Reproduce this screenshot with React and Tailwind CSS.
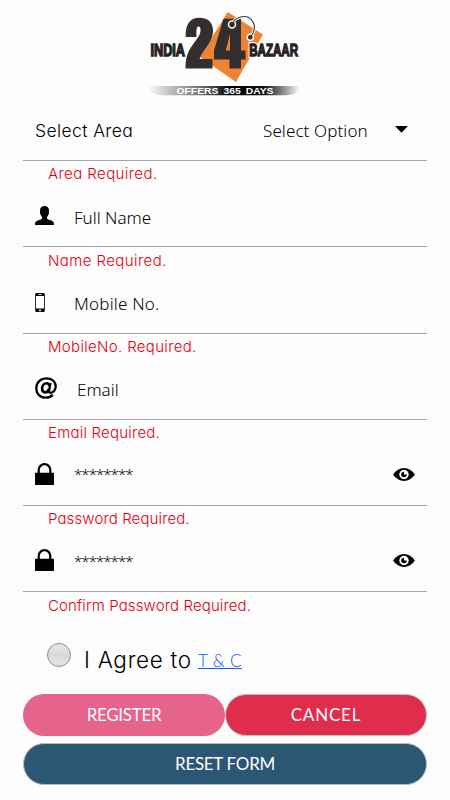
import React from "react";

const PersonIcon = () => (
  <svg className="block h-[19px] w-[19px]" viewBox="0 0 19 19">
    <path
      d="M9.5 0C6.700 0 5 1.600 5 4.500c0 .7.1 1.200.2 1.700-.6.3-.3 1.800.5 2.200.2 1.200.7 2 1.300 2.600v1.500C6.400 14.200.2 14 0 17.500V19h19v-1.500c-.2-3.500-6.400-3.300-7-5V11c.6-.6 1.100-1.400 1.300-2.600.8-.4 1.100-1.900.5-2.200.1-.5.2-1 .2-1.700C14 1.600 12.300 0 9.500 0z"
      fill="#000"
    />
  </svg>
);

const PhoneIcon = () => (
  <svg className="block h-[19px] w-[10px]" viewBox="0 0 10 19">
    <path
      fillRule="evenodd"
      d="M1.500 0h7A1.300 1.300 0 0 1 9.800 1.300v16.400A1.300 1.300 0 0 1 8.500 19h-7A1.300 1.300 0 0 1 .2 17.700V1.300A1.300 1.300 0 0 1 1.500 0zM1 3v12.500h8V3zM3.500 1.100v.8h3v-.8zM4.500 16.300v.6h-.7v.8h.7v.6h1v-.6h.7v-.8h-.7v-.6z"
      fill="#000"
    />
  </svg>
);

const AtIcon = () => (
  <svg className="block h-[22px] w-[22px]" viewBox="0 0 22 22" fill="none" stroke="#000">
    <path d="M17.800 17.900C16 19.800 13.700 20.700 11 20.700 5.200 20.700 1.300 16.900 1.300 11.300 1.300 5.400 5.600 1.300 11.500 1.300c5.300 0 9.200 3.200 9.200 8 0 4-2.600 6.500-5 6.500-1.500 0-1.900-.9-1.600-2.400l1.400-7.300" strokeWidth="2.300" />
    <path d="M14.500 8.900c-.3-1.700-1.300-2.700-2.900-2.700-2.600 0-4.500 2.500-4.500 5.400 0 2.300 1.100 3.800 3 3.800 2 0 3.500-1.600 4-4" strokeWidth="2.600" />
  </svg>
);

const LockIcon = () => (
  <svg className="block h-[22px] w-[19px]" viewBox="0 0 19 22">
    <path d="M3.700 10.500V7a5.800 5.800 0 0 1 11.600 0v3.500" fill="none" stroke="#000" strokeWidth="2.200" />
    <rect y="9.800" width="19" height="12.200" rx=".5" fill="#000" />
  </svg>
);

const EyeIcon = () => (
  <svg className="block h-[13px] w-[22px]" viewBox="0 0 22 13">
    <path d="M0 6.500C3 2.300 6.500 0 11 0s8 2.300 11 6.500C19 10.700 15.500 13 11 13S3 10.700 0 6.500z" fill="#000" />
    <circle cx="11" cy="6.500" r="4.700" fill="#fff" />
    <path d="M11 3.700a2.800 2.800 0 1 0 2.800 2.800H11z" fill="#000" />
  </svg>
);

const Logo = () => (
  <svg className="block h-[102px] w-[170px]" viewBox="140 0 170 102" role="img" aria-label="India 24 Bazaar">
    <defs>
      <linearGradient id="ribbon">
        <stop offset="0" stopColor="#fff" />
        <stop offset=".14" stopColor="#c5c5c5" />
        <stop offset=".34" stopColor="#777" />
        <stop offset=".55" stopColor="#000" />
        <stop offset=".76" stopColor="#111" />
        <stop offset=".9" stopColor="#999" />
        <stop offset="1" stopColor="#fff" />
      </linearGradient>
    </defs>
    <path d="M227.700 12L263 34.500 236 82l-36-25z" fill="#ee8431" />
    <path
      d="M185.700 37c-.4-12 3.500-19.300 13.800-19.300 9 0 13.500 5 13.500 13.300 0 11-9 17-13.500 28h13V68.500h-27c0-14 3.500-18.500 8.500-25.500 4-5.500 6.500-8.500 6.500-13 0-2.300-.4-3.500-1.800-3.500-2 0-2.300 2.400-2.300 6.400V37z"
      fill="#332f30"
    />
    <path
      fillRule="evenodd"
      d="M223.500 18.700H241V50.500h4.500v9H241V68.500h-11.500v-9H214V50.500zM230 34l-4.200 16.500H230z"
      fill="#332f30"
    />
    <g fontFamily="Liberation Sans, Arial, sans-serif" fontWeight="700" fontSize="17" fill="#262223" stroke="#262223">
      <text transform="translate(150.500 56) scale(.8 1)" textLength="43" lengthAdjust="spacingAndGlyphs" strokeWidth="1.400">INDIA</text>
      <text transform="translate(249.200 56) scale(.8 1)" textLength="61" lengthAdjust="spacingAndGlyphs" stroke="#fff" strokeWidth="4">BAZAAR</text>
      <text transform="translate(249.200 56) scale(.8 1)" textLength="61" lengthAdjust="spacingAndGlyphs" strokeWidth="1.400">BAZAAR</text>
    </g>
    <path d="M232.300 24.300C234.500 17 246 13.700 251.500 19.800c4.300 5 3.600 12-.8 16.900" fill="none" stroke="#fff" strokeWidth="3" />
    <circle cx="232" cy="24.500" r="3.500" fill="#332f30" stroke="#fff" strokeWidth="1.500" />
    <circle cx="250.300" cy="37.300" r="3.100" fill="#332f30" stroke="#fff" strokeWidth="1.400" />
    <path d="M232.300 24.300C234.500 17 246 13.700 251.500 19.800c4.300 5 3.600 12-.8 16.900" fill="none" stroke="#332f30" strokeWidth="1.100" />
    <path d="M147 86h153.500c-2 6.200-7 9.200-15 9.200h-123c-8 0-13.500-3-15.500-9.200z" fill="url(#ribbon)" />
    <text x="176.500" y="93.900" fontFamily="Liberation Sans, Arial, sans-serif" fontWeight="700" fontSize="9.400" fill="#fff" textLength="97" lengthAdjust="spacingAndGlyphs" wordSpacing="2">OFFERS 365 DAYS</text>
  </svg>
);

const fields = [
  { icon: PersonIcon, label: "Full Name", style: "ml-5 text-[17px]", iconShift: "mb-[3px]", error: "Name Required.", tracking: "tracking-[0.42px]" },
  { icon: PhoneIcon, label: "Mobile No.", style: "ml-[29px] text-[17px] tracking-[0.2px]", iconShift: "mb-[3px]", error: "MobileNo. Required.", tracking: "tracking-[0.33px]" },
  { icon: AtIcon, label: "Email", style: "ml-5 text-[17px]", iconShift: "mb-1", error: "Email Required.", tracking: "tracking-[0.22px]" },
  { icon: LockIcon, label: "********", style: "ml-5 mb-[3px] text-[15px] tracking-[-0.95px]", iconShift: "mb-1", error: "Password Required.", tracking: "tracking-[0.12px]", secret: true },
  { icon: LockIcon, label: "********", style: "ml-5 mb-[3px] text-[15px] tracking-[-0.95px]", iconShift: "mb-1", error: "Confirm Password Required.", tracking: "tracking-[0.13px]", secret: true },
];

const ErrorText = ({ tracking, children }) => (
  <p className={`flex h-[27.250px] items-center pl-[25px] font-['Inter',sans-serif] text-[15px] font-light text-[#e3000f] [font-feature-settings:'cv11'] ${tracking}`}>
    {children}
  </p>
);

export default function App() {
  return (
    <div className="h-[800px] w-[450px] overflow-hidden bg-[#fdfdfd] text-black">
      <header className="flex justify-center">
        <Logo />
      </header>

      <form className="ml-[23px] w-[404px]">
        {/* AREA */}
        <div className="flex h-[59px] items-center border-b border-[#a3a3aa] pl-3">
          <span className="w-[228px] pt-px font-['Inter',sans-serif] text-[17.500px] font-light tracking-[0.4px] [font-feature-settings:'cv11']">Select Area</span>
          <span className="w-[132px] font-['Noto_Sans',sans-serif] text-[17px] font-light tracking-[0.1px]">Select Option</span>
          <svg className="mb-1 block h-[7px] w-[13px]" viewBox="0 0 13 7">
            <path d="M0 0h13L6.500 6.700z" fill="#000" />
          </svg>
        </div>
        <ErrorText tracking="tracking-[0.42px]">Area Required.</ErrorText>

        {/* FIELDS */}
        {fields.map(({ icon: Icon, ...field }) => (
          <div key={field.error}>
            <div className="flex h-[59px] items-center border-b border-[#a3a3aa] pl-3">
              <span className={field.iconShift}>
                <Icon />
              </span>
              <span className={`font-['Noto_Sans',sans-serif] font-light ${field.style}`}>
                {field.label}
              </span>
              {field.secret && (
                <span className="mr-3 mb-[3px] ml-auto">
                  <EyeIcon />
                </span>
              )}
            </div>
            <ErrorText tracking={field.tracking}>{field.error}</ErrorText>
          </div>
        ))}

        {/* TERMS */}
        <div className="mt-[22px] flex h-[30px] items-center pl-6 font-light">
          <span className="mb-[3px] size-6 rounded-full border border-[#8d8d8d] bg-linear-to-b from-[#e9e9ea] via-[#d8d9da] to-[#e3e4e5]" />
          <span className="ml-[13px] w-[114px] pt-1.5 font-['Inter',sans-serif] text-[22.500px] font-light tracking-[0.7px] whitespace-nowrap [font-feature-settings:'cv11']">I Agree to</span>
          <a className="pt-2 font-['Lato',sans-serif] text-[17px] tracking-[0.4px] text-[#0a5cff] underline">T &amp; C</a>
        </div>

        {/* BUTTONS */}
        <div className="mt-[22px] grid grid-cols-2 font-['Lato',sans-serif] text-[17px] text-white">
          <button type="button" className="h-[42px] rounded-full bg-[#e6638b] tracking-[-0.3px]">REGISTER</button>
          <button type="button" className="h-[42px] rounded-full border border-[#c5bfc0] bg-[#df2d4c] tracking-[0.8px]">CANCEL</button>
          <button type="button" className="col-span-2 mt-[7px] h-[42px] rounded-full border border-[#b9bdc0] bg-[#2b5674] tracking-[-0.3px]">RESET FORM</button>
        </div>
      </form>
    </div>
  );
}
